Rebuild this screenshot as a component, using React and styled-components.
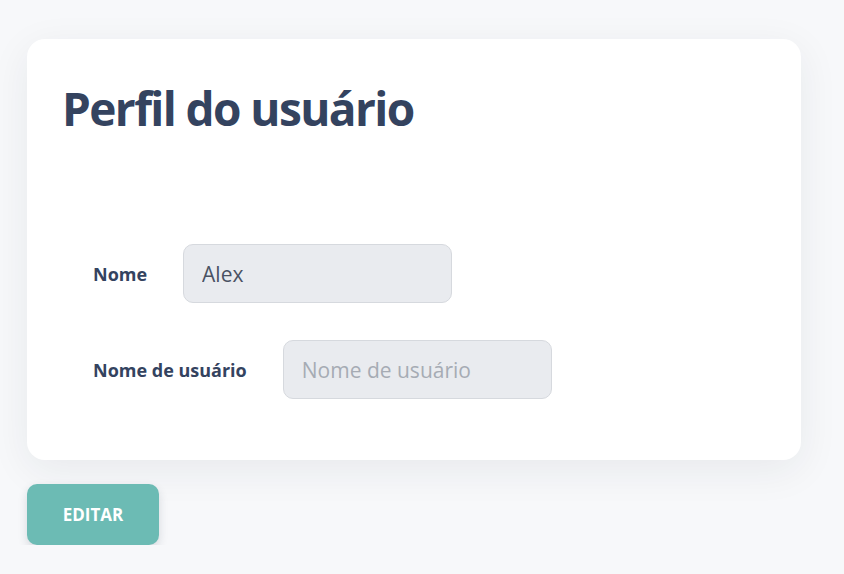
import styled, { createGlobalStyle } from 'styled-components';

const GlobalStyle = createGlobalStyle`
  html, body {
    margin: 0;
    padding: 0;
    background: #f7f8fa;
    font-family: "Open Sans", "Noto Sans", sans-serif;
  }
  * { box-sizing: border-box; }
`;

const Page = styled.div`
  padding: 39px 43px 0 27px;
  display: flex;
  flex-direction: column;
  align-items: flex-start;
  gap: 24px;
`;

const Card = styled.section`
  width: 774px;
  background: #fff;
  border-radius: 18px;
  box-shadow: 0 10px 40px rgba(30, 40, 60, 0.07);
  padding: 36px 37px 61px;
`;

const Title = styled.h1`
  margin: 0 0 0 -2px;
  font-size: 46px;
  font-weight: 700;
  letter-spacing: -1.6px;
  color: #34435f;
  line-height: 66px;
`;

const Fields = styled.div`
  margin-top: 103px;
  padding-left: 29px;
  display: flex;
  flex-direction: column;
  gap: 37px;
`;

const Row = styled.label`
  display: flex;
  align-items: center;
  gap: 36px;
`;

const Label = styled.span`
  font-size: 18px;
  font-weight: 700;
  color: #34435f;
`;

const Input = styled.input`
  width: 269px;
  height: 59px;
  padding: 0 18px;
  border: 1px solid #d6d9de;
  border-radius: 10px;
  background: #e9ebef;
  font-family: "Open Sans", "Noto Sans", sans-serif;
  font-size: 21px;
  color: #4a5263;
  outline: none;
  &::placeholder {
    color: #a6abb4;
  }
`;

const Button = styled.button`
  width: 132px;
  height: 61px;
  border: none;
  border-radius: 10px;
  background: #6cbbb4;
  color: #fff;
  font-family: "Open Sans", "Noto Sans", sans-serif;
  font-size: 17px;
  font-weight: 700;
  box-shadow: 0 4px 10px rgba(30, 40, 60, 0.15);
  cursor: pointer;
`;

function App() {
  return (
    <>
      <GlobalStyle />
      <Page>
        <Card>
          <Title>Perfil do usuário</Title>
          <Fields>
            <Row>
              <Label>Nome</Label>
              <Input defaultValue="Alex" readOnly />
            </Row>
            <Row>
              <Label>Nome de usuário</Label>
              <Input placeholder="Nome de usuário" readOnly />
            </Row>
          </Fields>
        </Card>
        <Button>EDITAR</Button>
      </Page>
    </>
  );
}

export default App;
